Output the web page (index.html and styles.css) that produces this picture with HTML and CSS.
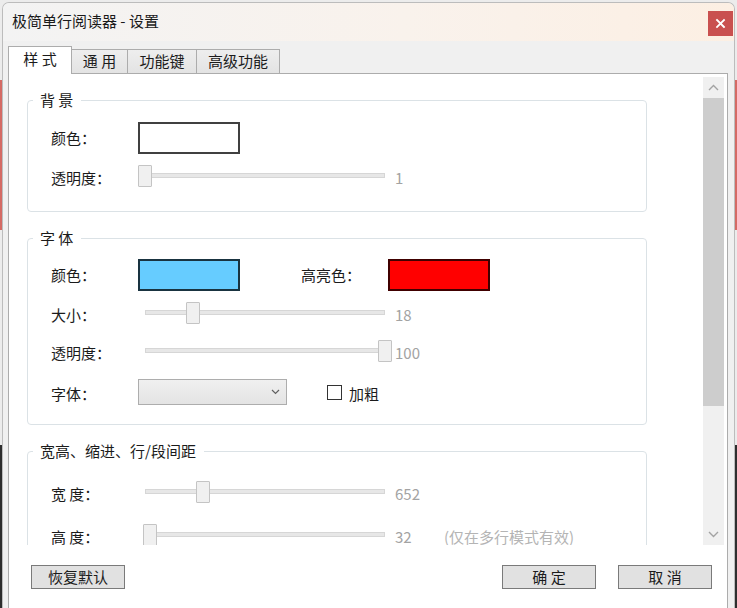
FILE: index.html
```html
<!DOCTYPE html>
<html lang="zh-CN">
<head>
    <meta charset="UTF-8">
    <meta name="viewport" content="width=device-width, initial-scale=1.0">
    <title>极简单行阅读器 - 设置</title>
    <link rel="stylesheet" href="styles.css">
</head>
<body>
    <div class="window">
        <div class="titlebar">
            <span class="title">极简单行阅读器 - 设置</span>
            <button class="close" aria-label="关闭">
                <svg width="11" height="11" viewBox="0 0 11 11"><path d="M2 2 L9 9 M9 2 L2 9" stroke="#fff" stroke-width="1.8" stroke-linecap="square"/></svg>
            </button>
        </div>

        <div class="frame">
            <div class="tabs">
                <div class="tab tab-style active">样 式</div>
                <div class="tab tab-general">通 用</div>
                <div class="tab tab-keys">功能键</div>
                <div class="tab tab-advanced">高级功能</div>
            </div>

            <div class="panel">
                <div class="scroller">
                    <div class="content">
                        <fieldset class="group group-bg">
                            <legend>背 景</legend>
                            <div class="row row-color">
                                <span class="label">颜色：</span>
                                <span class="swatch swatch-white"></span>
                            </div>
                            <div class="row">
                                <span class="label">透明度：</span>
                                <div class="slider"><div class="track"></div><div class="thumb" style="left: 0px"></div></div>
                                <span class="value">1</span>
                            </div>
                        </fieldset>

                        <fieldset class="group group-font">
                            <legend>字 体</legend>
                            <div class="row row-color">
                                <span class="label">颜色：</span>
                                <span class="swatch swatch-blue"></span>
                                <span class="label label-second">高亮色：</span>
                                <span class="swatch swatch-red"></span>
                            </div>
                            <div class="row">
                                <span class="label">大小：</span>
                                <div class="slider"><div class="track"></div><div class="thumb" style="left: 48px"></div></div>
                                <span class="value">18</span>
                            </div>
                            <div class="row">
                                <span class="label">透明度：</span>
                                <div class="slider"><div class="track"></div><div class="thumb" style="left: 240px"></div></div>
                                <span class="value">100</span>
                            </div>
                            <div class="row row-font">
                                <span class="label">字体：</span>
                                <div class="select">
                                    <svg width="9" height="6" viewBox="0 0 9 6"><path d="M1 1 L4.5 4.5 L8 1" fill="none" stroke="#606060" stroke-width="1.2"/></svg>
                                </div>
                                <span class="checkbox"></span>
                                <span class="check-label">加粗</span>
                            </div>
                        </fieldset>

                        <fieldset class="group group-size">
                            <legend>宽高、缩进、行/段间距</legend>
                            <div class="row">
                                <span class="label">宽 度：</span>
                                <div class="slider"><div class="track"></div><div class="thumb" style="left: 58px"></div></div>
                                <span class="value">652</span>
                            </div>
                            <div class="row">
                                <span class="label">高 度：</span>
                                <div class="slider"><div class="track"></div><div class="thumb" style="left: 5px"></div></div>
                                <span class="value">32</span>
                                <span class="note">(仅在多行模式有效)</span>
                            </div>
                        </fieldset>
                    </div>

                    <div class="scrollbar">
                        <div class="sb-btn">
                            <svg width="11" height="7" viewBox="0 0 11 7"><path d="M1 6 L5.5 1.5 L10 6" fill="none" stroke="#a3a3a3" stroke-width="1.4"/></svg>
                        </div>
                        <div class="sb-track"><div class="sb-thumb"></div></div>
                        <div class="sb-btn">
                            <svg width="11" height="7" viewBox="0 0 11 7"><path d="M1 1 L5.5 5.5 L10 1" fill="none" stroke="#a3a3a3" stroke-width="1.4"/></svg>
                        </div>
                    </div>
                </div>

                <div class="footer">
                    <button class="btn">恢复默认</button>
                    <span class="spacer"></span>
                    <button class="btn">确 定</button>
                    <button class="btn">取 消</button>
                </div>
            </div>
        </div>
    </div>
</body>
</html>
```

FILE: styles.css
```css
* {
    margin: 0;
    padding: 0;
    box-sizing: border-box;
}

html, body {
    height: 608px;
    overflow: hidden;
}

body {
    font-family: "Noto Sans CJK SC", "Microsoft YaHei", sans-serif;
    font-size: 15px;
    line-height: 20px;
    color: #1b1b1b;
    background: linear-gradient(to bottom, #ececec 0, #ececec 80px, #d46a64 80px, #d46a64 230px, #ececec 230px, #ececec 445px, #2e2e2e 445px);
}

button {
    font: inherit;
    color: inherit;
}

.window {
    width: 733px;
    height: 640px;
    margin: 2px 0 0 2px;
    border: 1px solid #bcbcbc;
    border-bottom: none;
    border-radius: 7px 7px 0 0;
    background: #f0f0f0;
    display: flex;
    flex-direction: column;
    overflow: hidden;
}

/* title bar */
.titlebar {
    height: 38px;
    flex-shrink: 0;
    display: flex;
    justify-content: space-between;
    align-items: flex-start;
    padding: 8px 1px 0 9px;
    background: linear-gradient(90deg, #f3f3f3 0%, #f9f2ec 55%, #fcefe3 100%);
}

.title {
    color: #1a1a1a;
}

.close {
    width: 25px;
    height: 25px;
    border: none;
    background: #c9504f;
    display: flex;
    align-items: center;
    justify-content: center;
}

/* tab frame */
.frame {
    flex: 1;
    display: flex;
    flex-direction: column;
    padding: 5px 6px 0 5px;
}

.tabs {
    height: 27px;
    display: flex;
    align-items: flex-end;
}

.tab {
    height: 24px;
    border: 1px solid #acacac;
    border-bottom: none;
    background: linear-gradient(#eeeeee, #e3e3e3);
    display: flex;
    align-items: center;
    justify-content: center;
    padding-bottom: 1px;
    margin-left: -1px;
}

.tab.active {
    height: 28px;
    margin-left: 0;
    margin-bottom: -1px;
    background: #fff;
    position: relative;
    z-index: 1;
    padding-bottom: 3px;
}

.tab-style { width: 64px; }
.tab-general { width: 57px; }
.tab-keys { width: 70px; }
.tab-advanced { width: 84px; }

.panel {
    flex: 1;
    display: flex;
    flex-direction: column;
    border: 1px solid #acacac;
    border-bottom: none;
    background: #fff;
}

.scroller {
    height: 471px;
    flex-shrink: 0;
    display: flex;
    overflow: hidden;
}

.content {
    flex: 1;
    padding: 16px 0 0 18px;
}

/* groups */
.group {
    width: 620px;
    border: 1px solid #dbe2e6;
    border-radius: 4px;
    padding: 9px 0 16px 0;
    margin-bottom: 16px;
}

.group legend {
    margin-left: 5px;
    padding: 0 8px 0 7px;
    line-height: 20px;
}

.group-font {
    padding: 8px 0 12px 0;
}

.group-size {
    padding: 12px 0 0 0;
}

.group-size .row + .row {
    margin-top: 5px;
}

.row {
    height: 38px;
    display: flex;
    align-items: center;
    padding-left: 23px;
}

.row-font {
    height: 40px;
    margin-top: 2px;
}

.label,
.value,
.note,
.check-label {
    padding-top: 3px;
}

.row-color .label {
    padding-top: 0;
}

.label {
    width: 87px;
    flex-shrink: 0;
}

.label-second {
    margin-left: 61px;
}

.swatch {
    width: 102px;
    height: 32px;
    border: 2px solid rgba(0, 0, 0, 0.75);
}

.swatch-white { background: #fff; }
.swatch-blue { background: #66ccff; }
.swatch-red { background: #ff0000; }

/* slider */
.slider {
    position: relative;
    width: 254px;
    height: 22px;
}

.track {
    position: absolute;
    left: 7px;
    right: 7px;
    top: 8px;
    height: 5px;
    background: #e7e7e7;
    border: 1px solid #d6d6d6;
}

.thumb {
    position: absolute;
    top: 0;
    width: 14px;
    height: 22px;
    background: #f0f0f0;
    border: 1px solid #c4c4c4;
    border-radius: 1px;
}

.value {
    margin-left: 3px;
    min-width: 49px;
    color: #a3a3a3;
}

.note {
    color: #b4b4b4;
}

/* font row */
.select {
    width: 149px;
    height: 26px;
    border: 1px solid #adadad;
    background: linear-gradient(#f0f0f0, #e4e4e4);
    display: flex;
    align-items: center;
    justify-content: flex-end;
    padding-right: 6px;
}

.checkbox {
    width: 15px;
    height: 15px;
    margin-left: 40px;
    border: 1px solid #333;
    background: #fff;
}

.check-label {
    margin-left: 7px;
}

/* scrollbar */
.scrollbar {
    width: 21px;
    margin: 3px 3px 0 0;
    display: flex;
    flex-direction: column;
    background: #f0f0f0;
}

.sb-btn {
    height: 21px;
    display: flex;
    align-items: center;
    justify-content: center;
}

.sb-track {
    flex: 1;
}

.sb-thumb {
    height: 308px;
    background: #cdcdcd;
}

/* footer */
.footer {
    display: flex;
    align-items: flex-start;
    gap: 22px;
    padding: 20px 15px 0 22px;
}

.spacer {
    flex: 1;
}

.btn {
    width: 94px;
    height: 24px;
    border: 1px solid #7a7a7a;
    background: #e1e1e1;
    line-height: 20px;
}
```
